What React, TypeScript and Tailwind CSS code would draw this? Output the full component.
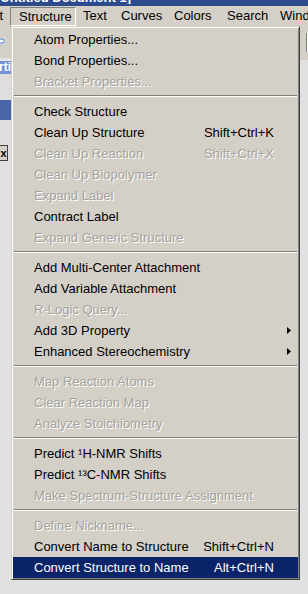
import React from 'react';

type MenuItem =
  | { kind: 'sep' }
  | {
      kind: 'item';
      label: string;
      shortcut?: string;
      disabled?: boolean;
      submenu?: boolean;
      active?: boolean;
    };

const sep: MenuItem = { kind: 'sep' };
const item = (label: string, opts: Partial<Omit<Extract<MenuItem, { kind: 'item' }>, 'kind' | 'label'>> = {}): MenuItem => ({
  kind: 'item',
  label,
  ...opts,
});

const MENU: MenuItem[] = [
  item('Atom Properties...'),
  item('Bond Properties...'),
  item('Bracket Properties...', { disabled: true }),
  sep,
  item('Check Structure'),
  item('Clean Up Structure', { shortcut: 'Shift+Ctrl+K' }),
  item('Clean Up Reaction', { shortcut: 'Shift+Ctrl+X', disabled: true }),
  item('Clean Up Biopolymer', { disabled: true }),
  item('Expand Label', { disabled: true }),
  item('Contract Label'),
  item('Expand Generic Structure', { disabled: true }),
  sep,
  item('Add Multi-Center Attachment'),
  item('Add Variable Attachment'),
  item('R-Logic Query...', { disabled: true }),
  item('Add 3D Property', { submenu: true }),
  item('Enhanced Stereochemistry', { submenu: true }),
  sep,
  item('Map Reaction Atoms', { disabled: true }),
  item('Clear Reaction Map', { disabled: true }),
  item('Analyze Stoichiometry', { disabled: true }),
  sep,
  item('Predict ¹H-NMR Shifts'),
  item('Predict ¹³C-NMR Shifts'),
  item('Make Spectrum-Structure Assignment', { disabled: true }),
  sep,
  item('Define Nickname...', { disabled: true }),
  item('Convert Name to Structure', { shortcut: 'Shift+Ctrl+N' }),
  item('Convert Structure to Name', { shortcut: 'Alt+Ctrl+N', active: true }),
];

function SubmenuArrow({ color }: { color: string }) {
  return (
    <svg width="4" height="7" viewBox="0 0 4 7" className="absolute right-[7px] top-[7px]">
      <path d="M0 0 L4 3.5 L0 7 Z" fill={color} />
    </svg>
  );
}

function DropdownMenu() {
  return (
    <div className="absolute left-[11px] top-[26px] w-[289px] h-[554px] bg-[#d4d0c8] border border-t-[#d4d0c8] border-l-[#d4d0c8] border-r-[#404040] border-b-[#404040] shadow-[inset_1px_1px_0_#ffffff,inset_-1px_-1px_0_#808080] pt-[2px] pb-[1px] px-[1px]">
      {MENU.map((m, i) => {
        if (m.kind === 'sep') {
          return (
            <div key={i} className="h-[9px] pt-[3px] px-[1px]">
              <div className="h-[1px] bg-[#808080]" />
              <div className="h-[1px] bg-white" />
            </div>
          );
        }
        const textClass = m.active
          ? 'text-white'
          : m.disabled
            ? 'text-[#a5a39e] [text-shadow:1px_1px_0_#ffffff]'
            : 'text-black';
        return (
          <div
            key={i}
            className={`relative flex h-[21px] items-center justify-between pl-[21px] pr-[24px] leading-[20px] whitespace-nowrap ${
              m.active ? 'bg-[#0a246a]' : ''
            } ${textClass}`}
          >
            <span>{m.label}</span>
            {m.shortcut && <span>{m.shortcut}</span>}
            {m.submenu && <SubmenuArrow color="#000000" />}
          </div>
        );
      })}
    </div>
  );
}

function MenuBar() {
  return (
    <div className="flex h-[20px] items-stretch bg-[#d4d0c8] text-black whitespace-nowrap">
      <div className="flex w-[10px] justify-end overflow-hidden pr-[7px] leading-[20px]">Object</div>
      <div className="mt-[1px] flex w-[66px] items-center border border-t-[#808080] border-l-[#808080] border-r-white border-b-white pl-[8px] pt-[1px]">
        Structure
      </div>
      <div className="w-[38px] pl-[7px] leading-[20px]">Text</div>
      <div className="w-[53px] pl-[7px] leading-[20px]">Curves</div>
      <div className="w-[53px] pl-[7px] leading-[20px]">Colors</div>
      <div className="w-[53px] pl-[7px] leading-[20px]">Search</div>
      <div className="flex-1 overflow-hidden pl-[7px] leading-[20px]">Window</div>
    </div>
  );
}

function TitleBar() {
  return (
    <div className="h-[6px] overflow-hidden bg-[#2c4a8c]">
      <div className="flex w-[131px] justify-end overflow-hidden -mt-[9px] leading-[13px] text-[13px] font-bold text-white whitespace-nowrap">
        ChemDraw Ultra - [Untitled Document 1]
      </div>
    </div>
  );
}

function LeftStrip() {
  return (
    <div className="flex w-[11px] flex-col overflow-hidden">
      <div className="h-[32px] bg-[#d4d0c8] pt-[11px]">
        <svg width="6" height="8" viewBox="0 0 6 8">
          <rect x="0" y="1" width="5" height="6" fill="#ffffff" />
          <path d="M0 2 L4 2 L4 6 L0 6" fill="none" stroke="#3a6fc4" strokeWidth="1" />
        </svg>
      </div>
      <div className="h-[3px] bg-[#e6e6e6]" />
      <div className="h-[13px] bg-[#7592d6] text-[12px] leading-[13px] font-bold text-white whitespace-nowrap -indent-[1px]">
        rtical
      </div>
      <div className="h-[26px] bg-[#dedede]" />
      <div className="h-[20px] bg-[#4865aa]" />
      <div className="h-[25px] bg-[#dedede]" />
      <div className="flex h-[16px] bg-[#dedede]">
        <div className="flex w-[8px] items-center justify-center border border-l-0 border-[#404040] bg-[#d4d0c8] text-[11px] font-bold leading-none text-black">
          x
        </div>
      </div>
      <div className="flex-1 bg-[#e1e1e1]" />
    </div>
  );
}

function RightStrip() {
  return (
    <div className="flex w-[8px] flex-col">
      <div className="h-[34px] bg-[#d4d0c8] pt-[7px]">
        <div className="ml-[6px] h-[19px] border-l border-[#808080] bg-white" />
      </div>
      <div className="flex-1 bg-[#e1e1e1]" />
    </div>
  );
}

export default function App() {
  return (
    <div className="relative flex h-[594px] w-[308px] flex-col overflow-hidden bg-[#e1e1e1] font-['Liberation_Sans',Arial,sans-serif] text-[13px]">
      <TitleBar />
      <MenuBar />
      <div className="flex flex-1">
        <LeftStrip />
        <div className="flex-1 bg-[#e1e1e1]" />
        <RightStrip />
      </div>
      <DropdownMenu />
    </div>
  );
}
